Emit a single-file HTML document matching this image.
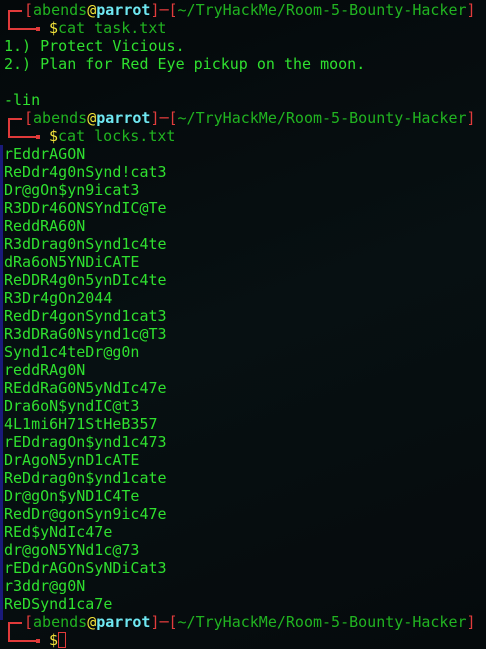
<!DOCTYPE html>
<html><head><meta charset="utf-8"><style>
html,body{margin:0;padding:0;background:#06090b;}
body{width:486px;height:649px;overflow:hidden;position:relative;
background:linear-gradient(160deg,#04080a 0%,#071012 50%,#050a0c 100%);}
.t{position:absolute;left:4px;top:1px;font-family:"DejaVu Sans Mono","Liberation Mono",monospace;font-size:15px;line-height:18px;color:#2fcf2f;}
.l{height:18px;position:relative;white-space:pre}
.r{color:#e23c3c}.g{color:#21b421}.y{color:#f2e33a}.c{color:#6fe8f2;font-weight:bold}
.p{padding-left:20px}
.o{color:#2fe02f}
.k{position:absolute;background:#e03a3a}
.cur{display:inline-block;width:8px;height:16px;border:1px solid #e03a3a;vertical-align:-3px;box-sizing:border-box}
.bar{position:absolute;left:0;top:145px;width:3px;height:475px;background:#1a1a7a}
</style></head><body>
<div class="bar"></div>
<div class="k" style="left:8px;top:10px;width:2px;height:20px"></div>
<div class="k" style="left:8px;top:10px;width:14px;height:2px"></div>
<div class="k" style="left:8px;top:28px;width:30px;height:2px"></div>
<div class="k" style="left:36px;top:27px;width:4px;height:4px"></div>
<div class="k" style="left:8px;top:118px;width:2px;height:20px"></div>
<div class="k" style="left:8px;top:118px;width:14px;height:2px"></div>
<div class="k" style="left:8px;top:136px;width:30px;height:2px"></div>
<div class="k" style="left:36px;top:135px;width:4px;height:4px"></div>
<div class="k" style="left:8px;top:622px;width:2px;height:20px"></div>
<div class="k" style="left:8px;top:622px;width:14px;height:2px"></div>
<div class="k" style="left:8px;top:640px;width:30px;height:2px"></div>
<div class="k" style="left:36px;top:639px;width:4px;height:4px"></div>
<div class="t"><div class="l p"><span class="r">[</span><span class="g">abends</span><span class="y">@</span><span class="c">parrot</span><span class="r">]─[</span><span class="g">~/TryHackMe/Room-5-Bounty-Hacker</span><span class="r">]</span></div><div class="l" style="padding-left:45px"><span class="y">$</span><span class="g">cat task.txt</span></div><div class="l o">1.) Protect Vicious.</div><div class="l o">2.) Plan for Red Eye pickup on the moon.</div><div class="l"> </div><div class="l o">-lin</div><div class="l p"><span class="r">[</span><span class="g">abends</span><span class="y">@</span><span class="c">parrot</span><span class="r">]─[</span><span class="g">~/TryHackMe/Room-5-Bounty-Hacker</span><span class="r">]</span></div><div class="l" style="padding-left:45px"><span class="y">$</span><span class="g">cat locks.txt</span></div><div class="l o">rEddrAGON</div><div class="l o">ReDdr4g0nSynd!cat3</div><div class="l o">Dr@gOn$yn9icat3</div><div class="l o">R3DDr46ONSYndIC@Te</div><div class="l o">ReddRA60N</div><div class="l o">R3dDrag0nSynd1c4te</div><div class="l o">dRa6oN5YNDiCATE</div><div class="l o">ReDDR4g0n5ynDIc4te</div><div class="l o">R3Dr4gOn2044</div><div class="l o">RedDr4gonSynd1cat3</div><div class="l o">R3dDRaG0Nsynd1c@T3</div><div class="l o">Synd1c4teDr@g0n</div><div class="l o">reddRAg0N</div><div class="l o">REddRaG0N5yNdIc47e</div><div class="l o">Dra6oN$yndIC@t3</div><div class="l o">4L1mi6H71StHeB357</div><div class="l o">rEDdragOn$ynd1c473</div><div class="l o">DrAgoN5ynD1cATE</div><div class="l o">ReDdrag0n$ynd1cate</div><div class="l o">Dr@gOn$yND1C4Te</div><div class="l o">RedDr@gonSyn9ic47e</div><div class="l o">REd$yNdIc47e</div><div class="l o">dr@goN5YNd1c@73</div><div class="l o">rEDdrAGOnSyNDiCat3</div><div class="l o">r3ddr@g0N</div><div class="l o">ReDSynd1ca7e</div><div class="l p"><span class="r">[</span><span class="g">abends</span><span class="y">@</span><span class="c">parrot</span><span class="r">]─[</span><span class="g">~/TryHackMe/Room-5-Bounty-Hacker</span><span class="r">]</span></div><div class="l" style="padding-left:45px"><span class="y">$</span><span class="cur"></span></div></div>
</body></html>
